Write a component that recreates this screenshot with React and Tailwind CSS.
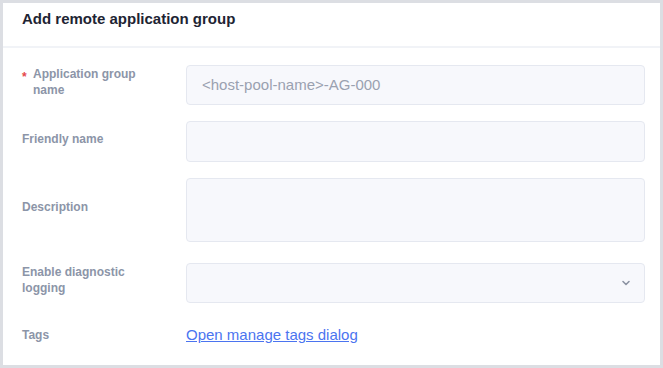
import React from 'react';

const Label = ({ children, required, lift = true }) => (
  <div className={`relative w-[183px] shrink-0 pl-[19px] pr-[36px] text-[12px] font-bold leading-[16px] text-[#8c95a8] ${lift ? 'pb-[6px]' : ''}`}>
    {required && <span className="absolute left-[19px] top-[3px] text-[#e5484d]">*</span>}
    <span className={required ? 'block pl-[11px]' : 'block'}>{children}</span>
  </div>
);

const fieldBox = 'w-[459px] rounded-[4px] border border-[#e5e8f0] bg-[#f7f8fc]';

const App = () => {
  return (
    <div className="h-[368px] w-[663px] bg-[#dcdee3] p-[3px]" style={{ fontFamily: '"Liberation Sans", Arial, sans-serif' }}>
      <div className="h-full w-full bg-white">
        {/* Header */}
        <div className="h-[45px] border-b-2 border-[#f1f3f7] px-[19px] pt-[7px]">
          <h2 className="text-[15px] font-bold leading-[17px] text-[#1e2433]">Add remote application group</h2>
        </div>

        {/* Form */}
        <div className="flex flex-col pt-[17px]">
          <div className="flex items-center">
            <Label required>Application group name</Label>
            <div className={`${fieldBox} flex h-[40px] items-center px-[15px] text-[15px] text-[#9aa1b0]`}>
              &lt;host-pool-name&gt;-AG-000
            </div>
          </div>

          <div className="mt-[16px] flex items-center">
            <Label>Friendly name</Label>
            <div className={`${fieldBox} h-[41px]`} />
          </div>

          <div className="mt-[16px] flex items-center">
            <Label>Description</Label>
            <div className={`${fieldBox} h-[64px]`} />
          </div>

          <div className="mt-[21px] flex items-center">
            <Label>Enable diagnostic logging</Label>
            <div className={`${fieldBox} flex h-[40px] items-center justify-end pr-[13px]`}>
              <svg width="10" height="10" viewBox="0 0 10 10" fill="none">
                <path d="M2 3.5 L5 6.5 L8 3.5" stroke="#8c93a3" strokeWidth="1.6" strokeLinecap="round" strokeLinejoin="round" />
              </svg>
            </div>
          </div>

          <div className="mt-[21px] flex items-center">
            <Label lift={false}>Tags</Label>
            <a href="#" className="text-[15px] text-[#4b74f0] underline">Open manage tags dialog</a>
          </div>
        </div>
      </div>
    </div>
  );
};

export default App;
